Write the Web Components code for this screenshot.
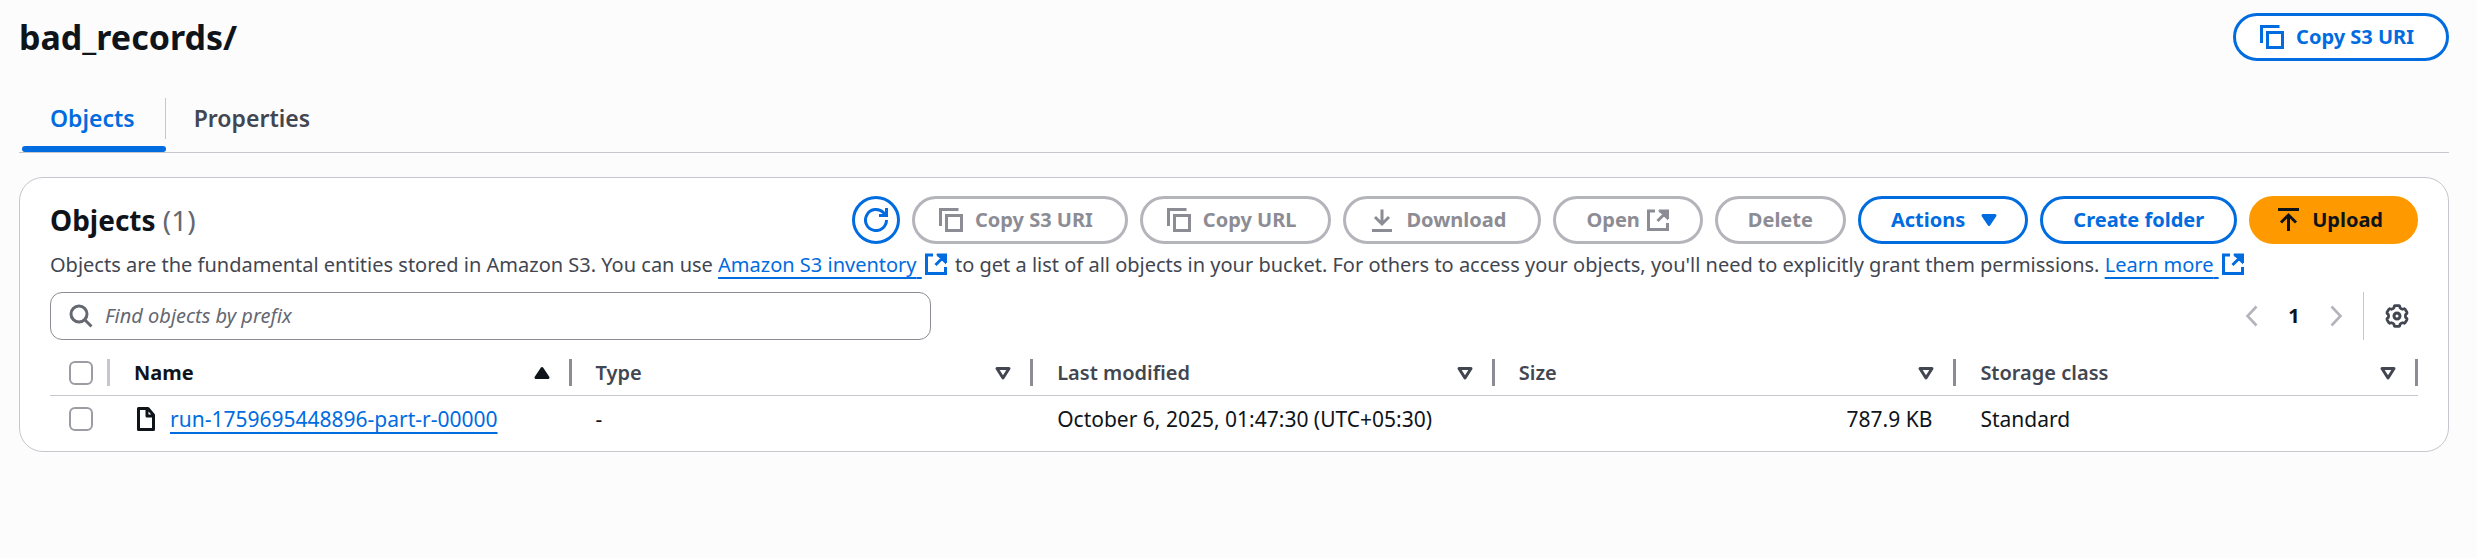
<!DOCTYPE html>
<html lang="en">
<head>
<meta charset="utf-8">
<meta name="viewport" content="width=device-width, initial-scale=1">
<title>bad_records/ - S3 bucket</title>
<style>
  body {
    margin: 0;
    background: #fcfcfd;
    color: #0f141a;
    font: 20px/30px "Noto Sans", "Open Sans", sans-serif;
  }
</style>
</head>
<body>
<s3-page>
  <h1 slot="title">bad_records/</h1>
  <s3-button slot="title-action" icon="copy">Copy S3 URI</s3-button>
  <s3-tabs slot="tabs" labels="Objects,Properties"></s3-tabs>
  <s3-panel count="(1)">
    <span slot="title">Objects</span>
    <s3-button slot="actions" icon="refresh" label="Refresh"></s3-button>
    <s3-button slot="actions" icon="copy" disabled>Copy S3 URI</s3-button>
    <s3-button slot="actions" icon="copy" disabled>Copy URL</s3-button>
    <s3-button slot="actions" icon="download" disabled>Download</s3-button>
    <s3-button slot="actions" end-icon="external" disabled>Open</s3-button>
    <s3-button slot="actions" disabled>Delete</s3-button>
    <s3-button slot="actions" end-icon="caret">Actions</s3-button>
    <s3-button slot="actions">Create folder</s3-button>
    <s3-button slot="actions" icon="upload" variant="primary">Upload</s3-button>
    <span slot="description">Objects are the fundamental entities stored in Amazon S3. You can use <s3-link external>Amazon S3 inventory</s3-link> to get a list of all objects in your bucket. For others to access your objects, you'll need to explicitly grant them permissions. <s3-link external>Learn more</s3-link></span>
    <s3-search slot="filter" placeholder="Find objects by prefix"></s3-search>
    <s3-pager slot="pager"></s3-pager>
    <s3-table></s3-table>
  </s3-panel>
</s3-page>

<script>
  const define = (name, css, html, setup) => {
    const template = document.createElement('template');
    customElements.define(name, class extends HTMLElement {
      constructor() {
        super();
        this.attachShadow({ mode: 'open' });
      }
      connectedCallback() {
        if (this.shadowRoot.hasChildNodes()) return;
        template.innerHTML = `<style>*{box-sizing:border-box}${css}</style>` +
          (typeof html === 'function' ? html(this) : html);
        this.shadowRoot.append(template.content.cloneNode(true));
        if (setup) setup(this);
      }
    });
  };

  // Six-toothed settings wheel centred in a 24-unit box.
  const gearPath = () => {
    const profile = [[-30, 8.4], [-20, 8.8], [-15, 10.3], [-9, 10.6], [9, 10.6], [15, 10.3], [20, 8.8]];
    const points = [];
    for (let tooth = 0; tooth < 360; tooth += 60) {
      for (const [offset, radius] of profile) {
        const angle = (tooth + offset) * Math.PI / 180;
        points.push((12 + radius * Math.sin(angle)).toFixed(2) + ' ' + (12 - radius * Math.cos(angle)).toFixed(2));
      }
    }
    return 'M' + points.join('L') + 'Z';
  };

  const ICONS = {
    copy: '<path d="M1.5 18V1.5H19.5M7.5 7.5h15v15h-15z"/>',
    refresh: '<path d="M22.5 12A10.5 10.5 0 1 1 19.6 4.8L22 7.5"/><path d="M22.5 0V7.5H15"/>',
    download: '<path d="M12 1.5V15M5 9l7 7 7-7M2 22.5H22"/>',
    upload: '<path d="M2 1.5H23M12.5 23V8M5 14.5L12.5 7 20 14.5"/>',
    external: '<path d="M9 3H2.5V21.5H21.5V15M13 3H21.5V11M21 3.5L11.5 13M15.5 4H20.5V9Z"/>',
    caret: '<path fill="currentColor" stroke-linejoin="round" d="M6 7.5H18L12 16.5Z"/>',
    search: '<circle cx="10" cy="10" r="8"/><path d="M15.5 15.5L22.5 22.5"/>',
    left: '<path stroke-width="2.6" d="M16.5 2.5L7.5 12 16.5 21.5"/>',
    right: '<path stroke-width="2.6" d="M7.5 2.5L16.5 12 7.5 21.5"/>',
    gear: `<path stroke-linejoin="round" stroke-width="2.8" d="${gearPath()}"/><circle cx="12" cy="12" r="3"/>`,
    file: '<path stroke-linejoin="round" d="M4.5 1.5H14L19.5 8V22.5H4.5ZM13 2V9H19.5"/>',
    'sort-up': '<path fill="currentColor" stroke-linejoin="round" d="M6 16.5H18L12 7.5Z"/>',
    'sort-none': '<path stroke-linejoin="round" d="M6 7.5H18L12 17Z"/>'
  };

  define('s3-icon', `
    :host { display: inline-block; width: 24px; height: 24px; flex: none; }
    svg { display: block; width: 100%; height: 100%; fill: none; stroke: currentColor; stroke-width: 3; }
  `, el => `<svg viewBox="0 0 24 24" aria-hidden="true">${ICONS[el.getAttribute('name')]}</svg>`);

  define('s3-page', `
    :host { display: block; padding: 13px 28px 0 19px; }
    header { display: flex; justify-content: space-between; align-items: center; height: 48px; }
    ::slotted(h1) { margin: 0; font-size: 34px; line-height: 48px; font-weight: 700; }
    nav { margin: 37px 0 24px; }
  `, `
    <header><slot name="title"></slot><slot name="title-action"></slot></header>
    <nav><slot name="tabs"></slot></nav>
    <main><slot></slot></main>
  `);

  define('s3-button', `
    :host { display: inline-block; flex: none; }
    button {
      display: flex; align-items: center; gap: 12px; height: 48px; padding: 0 30px;
      border: 3px solid #006ce0; border-radius: 24px; background: #fff; color: #006ce0;
      font: inherit; font-weight: 700; white-space: nowrap; cursor: pointer;
    }
    button.start { padding: 0 32px 0 24px; }
    button.end { padding-right: 24px; }
    button.link-out { gap: 6px; padding-right: 30px; }
    button.only { padding: 0 9px; }
    button.primary { background: #f90; border-color: #f90; color: #0f141a; }
    button:disabled { border-color: #b4b4bb; color: #8c8c94; cursor: default; }
  `, el => {
    const start = el.getAttribute('icon'), end = el.getAttribute('end-icon'), label = el.getAttribute('label');
    const classes = [label ? 'only' : start ? 'start' : '', end ? 'end' : '',
      end === 'external' ? 'link-out' : '', el.getAttribute('variant') || ''].join(' ');
    return `<button type="button" class="${classes}" ${label ? `aria-label="${label}"` : ''} ${el.hasAttribute('disabled') ? 'disabled' : ''}>
      ${start ? `<s3-icon name="${start}"></s3-icon>` : ''}${label ? '' : '<span><slot></slot></span>'}${end ? `<s3-icon name="${end}"></s3-icon>` : ''}</button>`;
  });

  define('s3-tabs', `
    :host { display: block; border-bottom: 1px solid #c6c6cd; }
    [role=tablist] { display: flex; padding-left: 3px; }
    button { display: grid; gap: 7px; padding: 0; border: 0; background: none; color: #424650; font: inherit; font-size: 23px; font-weight: 600; cursor: pointer; }
    span { height: 41px; padding: 0 30px 0 28px; line-height: 40px; }
    button:not(:last-child) span { border-right: 1px solid #c6c6cd; }
    button::after { content: ""; height: 6px; border-radius: 3px; }
    button[aria-selected=true] { color: #006ce0; }
    button[aria-selected=true]::after { background: #006ce0; }
  `, el => `<div role="tablist">${el.getAttribute('labels').split(',').map((label, i) =>
    `<button type="button" role="tab" aria-selected="${i === 0}"><span>${label}</span></button>`).join('')}</div>`,
  el => {
    const tabs = [...el.shadowRoot.querySelectorAll('button')];
    tabs.forEach(tab => tab.addEventListener('click', () =>
      tabs.forEach(other => other.setAttribute('aria-selected', other === tab))));
  });

  define('s3-link', `
    :host { display: inline; }
    a { color: #006ce0; text-decoration: none; }
    .text { text-decoration: underline 2px; text-underline-offset: 5px; text-decoration-skip-ink: none; }
    s3-icon { margin: 0 2px; vertical-align: -4px; }
  `, el => `<a href="#"><span class="text"><slot></slot>${el.hasAttribute('external') ? '&nbsp;' : ''}</span>${
    el.hasAttribute('external') ? '<s3-icon name="external"></s3-icon>' : ''}</a>`);

  define('s3-panel', `
    :host { display: block; padding: 18px 30px 9px; border: 1px solid #c6c6cd; border-radius: 24px; background: #fff; }
    .head, .tools { display: flex; justify-content: space-between; align-items: center; }
    h2 { margin: 0; font-size: 28px; line-height: 48px; font-weight: 700; }
    .count { color: #656871; font-weight: 400; }
    .actions { display: flex; gap: 12px; }
    p { margin: 6px 0 12px; line-height: 30px; color: #424650; }
    .tools { margin-bottom: 10px; }
    ::slotted(s3-search) { flex: 0 1 37.2%; }
  `, el => `
    <div class="head">
      <h2><slot name="title"></slot> <span class="count">${el.getAttribute('count')}</span></h2>
      <div class="actions"><slot name="actions"></slot></div>
    </div>
    <p><slot name="description"></slot></p>
    <div class="tools"><slot name="filter"></slot><slot name="pager"></slot></div>
    <slot></slot>
  `);

  define('s3-search', `
    :host { display: block; }
    label { display: flex; align-items: center; gap: 12px; height: 48px; padding: 0 18px; border: 1px solid #8c8c94; border-radius: 12px; color: #656871; }
    input { flex: 1; min-width: 0; padding: 0; border: 0; outline: 0; background: none; color: #0f141a; font: inherit; }
    input::placeholder { color: #656871; opacity: 1; font-style: italic; }
  `, el => `<label><s3-icon name="search"></s3-icon><input type="text" aria-label="Find objects" placeholder="${el.getAttribute('placeholder')}"></label>`);

  define('s3-pager', `
    :host { display: flex; align-items: center; height: 48px; }
    button { display: grid; place-items: center; width: 24px; height: 30px; padding: 0; border: 0; background: none; color: #424650; font: inherit; }
    button:disabled { color: #b4b4bb; }
    .page { width: 60px; color: #0f141a; font-weight: 700; }
    .settings { margin-left: 15px; padding: 0 9px 0 21px; width: 55px; height: 48px; border-left: 1px solid #c6c6cd; }
  `, `
    <button type="button" aria-label="Previous page" disabled><s3-icon name="left"></s3-icon></button>
    <button type="button" class="page" aria-current="page">1</button>
    <button type="button" aria-label="Next page" disabled><s3-icon name="right"></s3-icon></button>
    <button type="button" class="settings" aria-label="Preferences"><s3-icon name="gear"></s3-icon></button>
  `);

  const COLUMNS = ['Name', 'Type', 'Last modified', 'Size', 'Storage class'];

  define('s3-table', `
    :host { display: block; }
    table { width: 100%; table-layout: fixed; border-collapse: separate; border-spacing: 0; }
    .select { width: 60px; }
    th, td { height: 46px; padding: 0; text-align: left; vertical-align: middle; }
    th { border-bottom: 1px solid #c6c6cd; color: #424650; font-weight: 600; }
    th > div { display: flex; align-items: center; justify-content: space-between; padding-left: 24px; }
    th.select > div, td.select { padding-left: 19px; }
    th > div::after { content: ""; width: 3px; height: 27px; background: #8c8c94; }
    th.select > div::after { background: #c6c6cd; }
    th[aria-sort] { color: #0f141a; font-weight: 700; }
    button { display: flex; flex: 1; align-items: center; justify-content: space-between; margin-right: 15px; padding: 0; border: 0; background: none; color: inherit; font: inherit; cursor: pointer; }
    td { padding: 0 24px; font-size: 21px; }
    td.select { padding-right: 0; }
    td.number { text-align: right; }
    .file { display: flex; align-items: center; gap: 12px; }
    input { display: block; appearance: none; width: 24px; height: 24px; margin: 0; border: 2px solid #9c9ca4; border-radius: 6px; background: #fff; }
    input:checked { background: #006ce0; border-color: #006ce0; }
  `, `
    <table>
      <thead><tr>
        <th class="select"><div><input type="checkbox" aria-label="Select all objects"></div></th>
        ${COLUMNS.map((name, i) => `<th ${i ? '' : 'aria-sort="ascending"'}><div><button type="button">${name}<s3-icon name="${i ? 'sort-none' : 'sort-up'}"></s3-icon></button></div></th>`).join('')}
      </tr></thead>
      <tbody><tr>
        <td class="select"><input type="checkbox" aria-label="Select run-1759695448896-part-r-00000"></td>
        <td><div class="file"><s3-icon name="file"></s3-icon><s3-link>run-1759695448896-part-r-00000</s3-link></div></td>
        <td>-</td>
        <td>October 6, 2025, 01:47:30 (UTC+05:30)</td>
        <td class="number">787.9 KB</td>
        <td>Standard</td>
      </tr></tbody>
    </table>
  `);
</script>
</body>
</html>
